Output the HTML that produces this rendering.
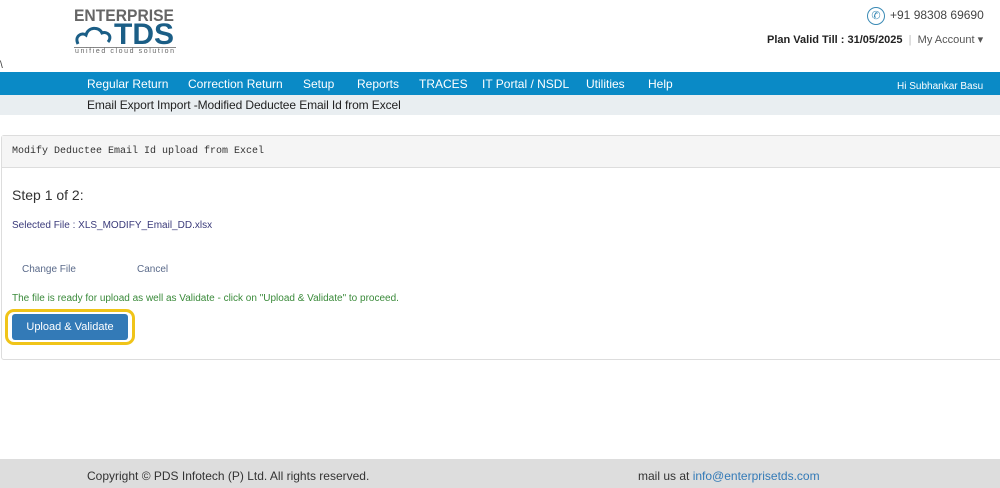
<!DOCTYPE html><html><head><style>
body{margin:0;width:1000px;height:488px;position:relative;background:#fff;font-family:"Liberation Sans",sans-serif;overflow:hidden}
.a{position:absolute;white-space:nowrap}
.n{position:absolute;top:77px;font-size:12px;color:#fff}
</style></head><body>
<div class="a" style="left:74px;top:6px;font-size:17px;font-weight:bold;color:#666;letter-spacing:0px;transform:scaleX(0.92);transform-origin:left">ENTERPRISE</div>
<svg class="a" style="left:74px;top:23px" width="42" height="24" viewBox="0 0 42 24"><path d="M4 21 C0 13 8 9 12 12 C14 4 25 3 28 10 C33 8 39 13 34 19" fill="none" stroke="#1b5e86" stroke-width="3"/></svg>
<div class="a" style="left:114px;top:18px;font-size:30px;color:#1b5e86;font-weight:bold;letter-spacing:0px">TDS</div>
<div class="a" style="left:74px;top:47px;width:102px;border-top:1px solid #888"></div>
<div class="a" style="left:75px;top:48px;font-size:7px;color:#666;letter-spacing:1.6px">unified cloud solution</div>
<div class="a" style="left:0;top:60px;font-size:10px;color:#333">\</div>
<div class="a" style="left:867px;top:7px;width:16px;height:16px;border:1px solid #3a8ab5;border-radius:50%;color:#3a8ab5;font-size:11px;text-align:center;line-height:16px">✆</div>
<div class="a" style="left:890px;top:8px;font-size:12px;color:#444">+91 98308 69690</div>
<div class="a" style="left:767px;top:33px;font-size:11px;color:#222;font-weight:bold">Plan Valid Till : 31/05/2025 <span style="color:#bbb;font-weight:normal">&nbsp;|&nbsp;</span> <span style="color:#555;font-weight:normal">My Account ▾</span></div>
<div class="a" style="left:0;top:72px;width:1000px;height:23px;background:#0a8ac6"></div>
<div class="n" style="left:87px">Regular Return</div>
<div class="n" style="left:188px">Correction Return</div>
<div class="n" style="left:303px">Setup</div>
<div class="n" style="left:357px">Reports</div>
<div class="n" style="left:419px">TRACES</div>
<div class="n" style="left:482px">IT Portal / NSDL</div>
<div class="n" style="left:586px">Utilities</div>
<div class="n" style="left:648px">Help</div>
<div class="a" style="left:897px;top:81px;font-size:10px;color:#fff">Hi Subhankar Basu</div>
<div class="a" style="left:0;top:95px;width:1000px;height:20px;background:#e9eef1"></div>
<div class="a" style="left:87px;top:98px;font-size:12px;color:#222;letter-spacing:-0.1px">Email Export Import -Modified Deductee Email Id from Excel</div>
<div class="a" style="left:1px;top:135px;width:1000px;height:223px;border:1px solid #ddd;border-radius:3px"></div>
<div class="a" style="left:2px;top:136px;width:998px;height:31px;background:#f5f5f5;border-bottom:1px solid #ddd"></div>
<div class="a" style="left:12px;top:146px;font-size:10px;font-family:'Liberation Mono',monospace;color:#333">Modify Deductee Email Id upload from Excel</div>
<div class="a" style="left:12px;top:187px;font-size:14px;color:#333">Step 1 of 2:</div>
<div class="a" style="left:12px;top:220px;font-size:10px;color:#3a3a7a">Selected File : XLS_MODIFY_Email_DD.xlsx</div>
<div class="a" style="left:22px;top:264px;font-size:10px;color:#5a6a8a">Change File</div>
<div class="a" style="left:137px;top:264px;font-size:10px;color:#5a6a8a">Cancel</div>
<div class="a" style="left:12px;top:293px;font-size:10px;color:#3a8a3a">The file is ready for upload as well as Validate - click on "Upload &amp; Validate" to proceed.</div>
<div class="a" style="left:5px;top:309px;width:130px;height:36px;border:3px solid #f0c419;border-radius:9px;box-sizing:border-box"></div>
<div class="a" style="left:12px;top:314px;width:116px;height:26px;background:#337ab7;border-radius:3px;color:#fff;font-size:11px;text-align:center;line-height:26px">Upload &amp; Validate</div>
<div class="a" style="left:0;top:459px;width:1000px;height:29px;background:#ddd"></div>
<div class="a" style="left:87px;top:469px;font-size:12px;color:#333">Copyright © PDS Infotech (P) Ltd. All rights reserved.</div>
<div class="a" style="left:638px;top:469px;font-size:12px;color:#333">mail us at <span style="color:#337ab7">info@enterprisetds.com</span></div>
</body></html>
